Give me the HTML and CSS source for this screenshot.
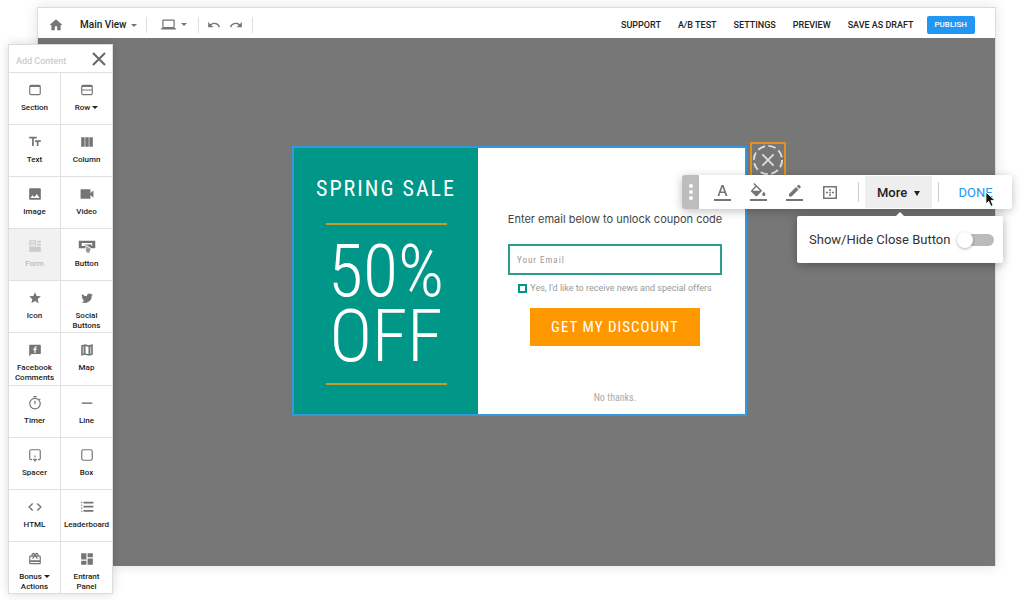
FILE: index.html
```html
<!DOCTYPE html>
<html lang="en">
<head>
  <meta charset="UTF-8" />
  <meta name="viewport" content="width=device-width, initial-scale=1.0"/>
  <title>Spring Sale - Main View</title>
  <link rel="stylesheet" href="styles.css">
</head>
<body>
  <div class="app">
    <header class="topbar">
      <div class="topbar-left">
        <button class="icon-btn home-btn" aria-label="Home"><svg viewBox="0 0 24 24" width="14" height="14"><path d="M10 21v-7h4v7h6v-9h3L12 2 1 12h3v9z"/></svg></button>
        <button class="view-btn">Main View <span class="caret"></span></button>
        <span class="divider"></span>
        <button class="icon-btn device-btn" aria-label="Device"><svg viewBox="0 0 24 24" width="15" height="15"><path d="M20 18c1.100 0 2-.9 2-2V6c0-1.100-.9-2-2-2H4c-1.100 0-2 .9-2 2v10c0 1.100.9 2 2 2H0v2h24v-2zM4 6h16v10H4z"/></svg><span class="caret"></span></button>
        <span class="divider"></span>
        <button class="icon-btn" aria-label="Undo"><svg viewBox="0 0 24 24" width="14" height="14"><path d="M12.500 8c-2.650 0-5.050 1-6.900 2.600L2 7v9h9l-3.620-3.620A8 8 0 0 1 20.080 16l2.370-.78A10.500 10.500 0 0 0 12.500 8z"/></svg></button>
        <button class="icon-btn redo-btn" aria-label="Redo"><svg viewBox="0 0 24 24" width="14" height="14"><path d="M18.400 10.600A10.500 10.500 0 0 0 1.540 15.220L3.900 16a8 8 0 0 1 12.720-3.620L13 16h9V7z"/></svg></button>
        <span class="divider"></span>
      </div>
      <nav class="topbar-nav">
        <a href="#">SUPPORT</a>
        <a href="#">A/B TEST</a>
        <a href="#">SETTINGS</a>
        <a href="#">PREVIEW</a>
        <a href="#">SAVE AS DRAFT</a>
        <button class="publish-btn">PUBLISH</button>
      </nav>
    </header>

    <main class="canvas">
      <div class="popup">
        <section class="offer">
          <h2>SPRING SALE</h2>
          <p>50%<br>OFF</p>
        </section>
        <form class="signup">
          <label class="signup-title" for="email">Enter email below to unlock coupon code</label>
          <input type="email" id="email" placeholder="Your Email">
          <label class="optin"><input type="checkbox"> <span>Yes, I'd like to receive news and special offers</span></label>
          <button type="button" class="discount-btn">GET MY DISCOUNT</button>
          <a href="#" class="no-thanks">No thanks.</a>
        </form>

        <button class="popup-close" aria-label="Close"><svg viewBox="0 0 34 34" width="34" height="34"><circle cx="17" cy="17" r="15" stroke-dasharray="8 3.780"/><path d="M11 11l12 12M23 11L11 23"/></svg></button>

        <div class="toolbar">
          <span class="handle"><i></i><i></i><i></i></span>
          <div class="tools">
            <button class="icon-btn" aria-label="Text color"><svg viewBox="0 0 20 20" width="20" height="20"><path d="M2 17h17v2H2zM9.500 3h2l4 11h-1.900l-1-2.900H8.300L7.300 14H5.500zm1 2L8.900 9.600h3.200z"/></svg></button>
            <button class="icon-btn" aria-label="Fill color"><svg viewBox="0 0 20 20" width="20" height="20"><path d="M2 17h17v2H2zM6.300 1l-1 1 2 2-4 4.200c-.5.500-.5 1 0 1.500l4.300 4.200c.5.500 1 .5 1.500 0l4.400-4.400c.5-.5.5-1 0-1.500zm2 4l1.500 1.500L12 8.800H4.700zM15.800 9.500s-1.600 2-1.600 3a1.600 1.600 0 0 0 3.200 0c0-1-1.600-3-1.600-3z"/></svg></button>
            <button class="icon-btn" aria-label="Border color"><svg viewBox="0 0 20 20" width="20" height="20"><path d="M2 17h17v2H2zM5 12v2.500h2.500l7-7L12 5zM12.800 4.200l2.500 2.500 1.300-1.300c.3-.3.3-.7 0-1L15.100 3c-.3-.3-.7-.3-1 0z"/></svg></button>
            <button class="icon-btn" aria-label="Spacing"><svg viewBox="0 0 20 20" width="20" height="20"><path d="M3 4h14v13H3zm1.500 1.500v10h11v-10zM9.200 7h1.600v2H9.200zM9.200 12h1.600v2H9.200zM6 9.700h2v1.600H6zM12 9.700h2v1.600h-2zM9.200 9.700h1.600v1.600H9.200z" fill-rule="evenodd"/></svg></button>
          </div>
          <span class="divider"></span>
          <button class="more-btn">More <span class="caret"></span></button>
          <span class="divider"></span>
          <button class="done-btn">DONE</button>
          <svg class="cursor" viewBox="0 0 12 18" width="11" height="17"><path d="M1 1v13l3-3 2.500 5.500 2.300-1L6.500 10H11z"/></svg>
        </div>

        <div class="popover">
          <label for="show-close">Show/Hide Close Button</label>
          <input type="checkbox" id="show-close" class="switch">
        </div>
      </div>
    </main>
  </div>

  <aside class="panel">
    <div class="panel-header">
      <span>Add Content</span>
      <button class="icon-btn" aria-label="Close panel"><svg viewBox="0 0 14 14" width="14" height="14"><path d="M1 1l12 12M13 1L1 13" fill="none" stroke="#666" stroke-width="2"/></svg></button>
    </div>
    <div class="blocks">
      <button class="block"><svg viewBox="0 0 24 24"><path d="M19 3H5a3 3 0 0 0-3 3v12a3 3 0 0 0 3 3h14a3 3 0 0 0 3-3V6a3 3 0 0 0-3-3zm1 15c0 .6-.4 1-1 1H5c-.6 0-1-.4-1-1V7h16z"/></svg><span>Section</span></button>
      <button class="block"><svg viewBox="0 0 24 24"><path fill-rule="evenodd" d="M5 3h14a3 3 0 0 1 3 3v12a3 3 0 0 1-3 3H5a3 3 0 0 1-3-3V6a3 3 0 0 1 3-3zM4 7v4h16V7zm0 6v6h16v-6z"/></svg><span>Row <i class="caret"></i></span></button>
      <button class="block"><svg viewBox="0 0 24 24"><path d="M2 3v3h5v13h3V6h5V3zM12 9v3h3v7h3v-7h4V9z"/></svg><span>Text</span></button>
      <button class="block"><svg viewBox="0 0 24 24"><path d="M2 4h6v16H2zM9 4h6v16H9zM16 4h6v16h-6z"/></svg><span>Column</span></button>
      <button class="block"><svg viewBox="0 0 24 24"><path d="M22 20V4a2 2 0 0 0-2-2H4a2 2 0 0 0-2 2v16c0 1.100.9 2 2 2h16a2 2 0 0 0 2-2zM8 14l3 3.500 4-5.500 5 7H4z"/></svg><span>Image</span></button>
      <button class="block"><svg viewBox="0 0 24 24"><path d="M18 10.500V5c0-.6-.4-1-1-1H2c-.6 0-1 .4-1 1v14c0 .6.4 1 1 1h15c.6 0 1-.4 1-1v-5.500l5 5V5.500z"/></svg><span>Video</span></button>
      <button class="block disabled" disabled><svg viewBox="0 0 24 24"><path d="M2 13h20v9H2z"/><path fill-rule="evenodd" d="M2 2h12v9H2zm2 2v2h8V4zm0 4v2h8V8zM16 3h6v3h-6zM16 8h6v3h-6z"/></svg><span>Form</span></button>
      <button class="block"><svg class="wide" viewBox="0 0 24 18"><path fill-rule="evenodd" d="M1 2h22v10h-5l-8-5v5H1zm4 3v4h4V7h9v2h1V5z"/><path d="M11 9l6 4-2 5h-3l-2-4 1-1z" fill="#999"/></svg><span>Button</span></button>
      <button class="block"><svg viewBox="0 0 24 24"><path d="M12 17.300l6.200 3.700-1.600-7L22 9.200l-7.200-.6L12 2 9.200 8.600 2 9.200 7.500 14l-1.700 7z"/></svg><span>Icon</span></button>
      <button class="block"><svg viewBox="0 0 24 24"><path d="M22 6c-.8.400-1.500.6-2.300.7.800-.5 1.500-1.300 1.800-2.200-.8.400-1.700.8-2.600 1A4.100 4.100 0 0 0 12 9.200 11.600 11.600 0 0 1 3.500 5a4.100 4.100 0 0 0 1.300 5.500c-.7 0-1.300-.2-1.900-.5 0 2 1.400 3.700 3.300 4-.6.200-1.200.2-1.800.1.500 1.600 2 2.800 3.800 2.800A8.200 8.200 0 0 1 2 18.600 11.600 11.600 0 0 0 20 8.300c.8-.6 1.500-1.400 2-2.300z"/></svg><span>Social<br>Buttons</span></button>
      <button class="block"><svg viewBox="0 0 24 24"><path fill-rule="evenodd" d="M4 3h16a2 2 0 0 1 2 2v12a2 2 0 0 1-2 2H6l-4 4V5c0-1 1-2 2-2zm7 5v2H9v2h2v5h2v-5h2v-2h-2V8.500c0-.5.300-.7.800-.7H15V6h-2c-1.500 0-2 1-2 2z"/></svg><span>Facebook<br>Comments</span></button>
      <button class="block"><svg viewBox="0 0 24 24"><path d="M21 2l-6 2-6-2-7 2v18l7-2 6 2 7-2V2z"/><path d="M9.500 5l5 1.700v12.500l-5-1.700z" fill="#fff"/><path d="M4.500 6L7 5.200v12.600l-2.500.8zM17 6.500l2.500-.8v12.500l-2.500.8z" fill="#bbb"/></svg><span>Map</span></button>
      <button class="block"><svg viewBox="0 0 24 24"><path d="M9 0h6v2H9zM11 8h2v6h-2z"/><path d="M19 7l2-2" stroke="#757575" stroke-width="2"/><circle cx="12" cy="13" r="9" fill="none" stroke="#757575" stroke-width="2"/></svg><span>Timer</span></button>
      <button class="block"><svg viewBox="0 0 24 24"><path d="M3 11h18v2.500H3z"/></svg><span>Line</span></button>
      <button class="block"><svg viewBox="0 0 24 24"><path d="M7 20H5a2 2 0 0 1-2-2V5c0-1.100.9-2 2-2h14a2 2 0 0 1 2 2v13a2 2 0 0 1-2 2h-2M12 13v3M12 18v4M9 19l3 3 3-3" fill="none" stroke="#757575" stroke-width="2"/></svg><span>Spacer</span></button>
      <button class="block"><svg viewBox="0 0 24 24"><rect x="3" y="3" width="18" height="18" rx="3" fill="none" stroke="#757575" stroke-width="2"/></svg><span>Box</span></button>
      <button class="block"><svg viewBox="0 0 24 24"><path d="M8 6l-6 6 6 6M16 6l6 6-6 6" fill="none" stroke="#757575" stroke-width="2.500"/></svg><span>HTML</span></button>
      <button class="block"><svg viewBox="0 0 24 24"><path d="M2 3h2v2H2zM2 8h2v2H2zM2 13h2v2H2zM2 18h2v2H2zM6 3h17v3H6zM6 10h17v3H6zM6 17h17v3H6z"/></svg><span>Leaderboard</span></button>
      <button class="block"><svg viewBox="0 0 24 24"><path d="M20 6h-2.200A3 3 0 0 0 12 3.500 3 3 0 0 0 6.200 6H4a2 2 0 0 0-2 2v11c0 1.100.9 2 2 2h16a2 2 0 0 0 2-2V8a2 2 0 0 0-2-2zm-5-2a1 1 0 1 1 0 2 1 1 0 0 1 0-2zM9 4a1 1 0 1 1 0 2 1 1 0 0 1 0-2zm11 15H4v-2h16zm0-5H4V8h5l-2 3 1.600 1L12 7.500l3.400 4.500 1.600-1-2-3h5z"/></svg><span>Bonus <i class="caret"></i><br>Actions</span></button>
      <button class="block"><svg viewBox="0 0 24 24"><path d="M2 2h9v11H2zM13 2h9v7h-9zM13 11h9v11h-9zM2 15h9v7H2z"/></svg><span>Entrant<br>Panel</span></button>
    </div>
  </aside>
</body>
</html>
```
FILE: styles.css
```css
:root {
  --teal: #009688;
  --blue: #2196f3;
  --orange: #ff9800;
  --gray: #777777;
  --icon: #757575;
  --line: #e0e0e0;
  --narrow: "Roboto Condensed", "Liberation Sans Narrow", Roboto, sans-serif;
}
* {
  box-sizing: border-box;
  margin: 0;
  padding: 0;
}
body {
  position: relative;
  min-height: 100vh;
  padding: 7px 28px 34px 37px;
  background: #fff;
  color: #222;
  font-family: Roboto, sans-serif;
  font-size: 9px;
  display: flex;
}
button {
  border: none;
  background: none;
  font-family: inherit;
  color: inherit;
  cursor: pointer;
}
a {
  color: inherit;
  text-decoration: none;
}
svg {
  display: block;
  fill: var(--icon);
}
.app {
  flex: 1;
  display: flex;
  flex-direction: column;
  border: 1px solid #ddd;
  border-bottom: none;
  box-shadow: 0 0 12px rgba(0, 0, 0, 0.12);
}
.caret {
  display: inline-block;
  border: 3px solid transparent;
  border-top-color: currentColor;
  border-bottom: none;
  vertical-align: middle;
}
.divider {
  width: 1px;
  height: 16px;
  background: var(--line);
}
.icon-btn {
  display: flex;
  align-items: center;
}

/* top bar */
.topbar {
  height: 30px;
  display: flex;
  align-items: center;
  justify-content: space-between;
  padding: 3px 20px 0 11px;
  background: #fff;
}
.topbar-left {
  display: flex;
  align-items: center;
}
.topbar .caret {
  color: var(--icon);
  margin-left: 2px;
}
.view-btn {
  margin: 0 9px 0 17px;
  font-size: 10px;
  font-weight: 500;
}
.device-btn {
  gap: 3px;
  margin: 0 11px 0 14px;
}
.divider + .icon-btn:not(.device-btn) {
  margin-left: 8px;
}
.redo-btn {
  margin: 0 9px 0 8px;
}
.topbar-nav {
  display: flex;
  align-items: center;
  gap: 17px;
  font-weight: 500;
}
.publish-btn {
  height: 18px;
  padding: 0 8px;
  margin-left: -4px;
  border-radius: 2px;
  background: var(--blue);
  color: #fff;
  font-size: 8px;
  font-weight: 500;
}

/* canvas and popup */
.canvas {
  flex: 1;
  display: flex;
  justify-content: center;
  align-items: flex-start;
  padding: 108px 0 108px 6px;
  background: var(--gray);
}
.popup {
  position: relative;
  width: 455px;
  display: flex;
  border: 2px solid #3498db;
  background: #fff;
}
.offer {
  flex: none;
  width: 184px;
  padding: 25px 0 29px;
  display: flex;
  flex-direction: column;
  align-items: center;
  background: var(--teal);
  color: #fff;
  text-align: center;
  font-family: var(--narrow);
}
.offer h2 {
  margin-bottom: 18px;
  font-size: 22px;
  line-height: 32px;
  font-weight: 400;
  letter-spacing: 2px;
}
.offer p {
  width: 121px;
  padding: 14px 0;
  border-top: 2px solid #c49a2a;
  border-bottom: 2px solid #c49a2a;
  font-size: 72px;
  line-height: 65px;
  font-weight: 300;
}
.signup {
  flex: 1;
  min-width: 0;
  display: flex;
  flex-direction: column;
  align-items: center;
  padding: 62px 23px 8px 30px;
}
.signup-title {
  margin-bottom: 16px;
  color: #444;
  font-family: Inter, sans-serif;
  font-size: 11px;
  line-height: 18px;
  white-space: nowrap;
}
.signup input[type="email"] {
  width: 214px;
  height: 31px;
  padding: 0 7px;
  border: 2px solid #2a9d8f;
  font-family: var(--narrow);
  font-size: 9px;
  letter-spacing: 1px;
}
.signup input::placeholder {
  color: #999;
}
.optin {
  display: flex;
  align-items: center;
  gap: 3px;
  margin: 5px 0 12px;
  color: #999;
  font-size: 9px;
  line-height: 16px;
  white-space: nowrap;
}
.optin input {
  appearance: none;
  width: 9px;
  height: 9px;
  border: 2px solid var(--teal);
}
.discount-btn {
  width: 170px;
  height: 38px;
  background: var(--orange);
  color: #fff;
  font-family: var(--narrow);
  font-size: 15px;
  letter-spacing: 1px;
}
.no-thanks {
  margin-top: auto;
  color: #aaa;
  font-family: var(--narrow);
  font-size: 10px;
  line-height: 16px;
}

/* editing controls on top of the popup */
.popup-close {
  position: absolute;
  top: -6px;
  left: 456px;
  border: 2px solid #dd9322;
}
.popup-close svg {
  width: 32px;
  height: 32px;
  fill: none;
  stroke: #ddd;
  stroke-width: 2;
}
.toolbar {
  position: absolute;
  top: 27px;
  left: 388px;
  width: 330px;
  height: 34px;
  display: flex;
  align-items: center;
  border-radius: 3px;
  background: #fff;
  box-shadow: 0 2px 10px rgba(0, 0, 0, 0.25);
}
.handle {
  width: 17px;
  height: 34px;
  display: flex;
  flex-direction: column;
  align-items: center;
  justify-content: center;
  gap: 2px;
  border-radius: 3px 0 0 3px;
  background: #bdbdbd;
}
.handle i {
  width: 4px;
  height: 4px;
  border-radius: 50%;
  background: #fff;
}
.tools {
  display: flex;
  gap: 16px;
  padding: 0 18px 0 13px;
}
.toolbar .divider {
  height: 20px;
  background: #ccc;
}
.more-btn {
  height: 32px;
  margin: 0 6px;
  padding: 0 12px;
  background: #eee;
  font-size: 13px;
  font-weight: 500;
}
.more-btn .caret {
  margin-left: 4px;
  border-top-width: 5px;
}
.done-btn {
  margin-left: 19px;
  color: var(--blue);
  font-size: 13px;
}
.cursor {
  position: absolute;
  top: 16px;
  left: 303px;
  fill: #111;
  stroke: #fff;
}
.popover {
  position: absolute;
  top: 68px;
  left: 503px;
  width: 206px;
  height: 47px;
  display: flex;
  align-items: center;
  justify-content: space-between;
  padding: 0 9px 0 12px;
  border-radius: 2px;
  background: #fff;
  box-shadow: 0 2px 10px rgba(0, 0, 0, 0.3);
  color: #333;
  font-size: 13px;
  white-space: nowrap;
}
.popover::before {
  content: "";
  position: absolute;
  top: -4px;
  left: 98px;
  border: 5px solid transparent;
  border-top: none;
  border-bottom-color: #fff;
}
.switch {
  appearance: none;
  position: relative;
  width: 34px;
  height: 12px;
  border-radius: 6px;
  background: #bbb;
}
.switch::before {
  content: "";
  position: absolute;
  top: -2px;
  left: -3px;
  width: 16px;
  height: 16px;
  border-radius: 50%;
  background: #fff;
  box-shadow: 0 1px 3px rgba(0, 0, 0, 0.3);
}

/* add content panel */
.panel {
  position: absolute;
  top: 44px;
  left: 8px;
  bottom: 6px;
  width: 105px;
  display: flex;
  flex-direction: column;
  border: 1px solid #ddd;
  background: #fff;
  box-shadow: 0 0 10px rgba(0, 0, 0, 0.15);
}
.panel-header {
  height: 27px;
  display: flex;
  align-items: center;
  justify-content: space-between;
  padding: 0 6px 0 7px;
  color: #ccc;
  font-weight: 500;
}
.panel-header span {
  padding-top: 4px;
}
.blocks {
  flex: 1;
  display: grid;
  grid-template-columns: 1fr 1fr;
  grid-auto-rows: 1fr;
  gap: 1px;
  padding-top: 1px;
  background: var(--line);
}
.block {
  min-width: 0;
  display: flex;
  flex-direction: column;
  align-items: center;
  gap: 6px;
  padding-top: 10px;
  background: #fff;
  font-size: 8px;
  line-height: 10px;
  font-weight: 500;
}
.block svg {
  width: 14px;
  height: 14px;
  flex: none;
}
.block svg.wide {
  width: 18px;
}
.block.disabled {
  background: #f1f1f1;
  color: #bbb;
}
.block.disabled svg {
  fill: #ccc;
}
```
